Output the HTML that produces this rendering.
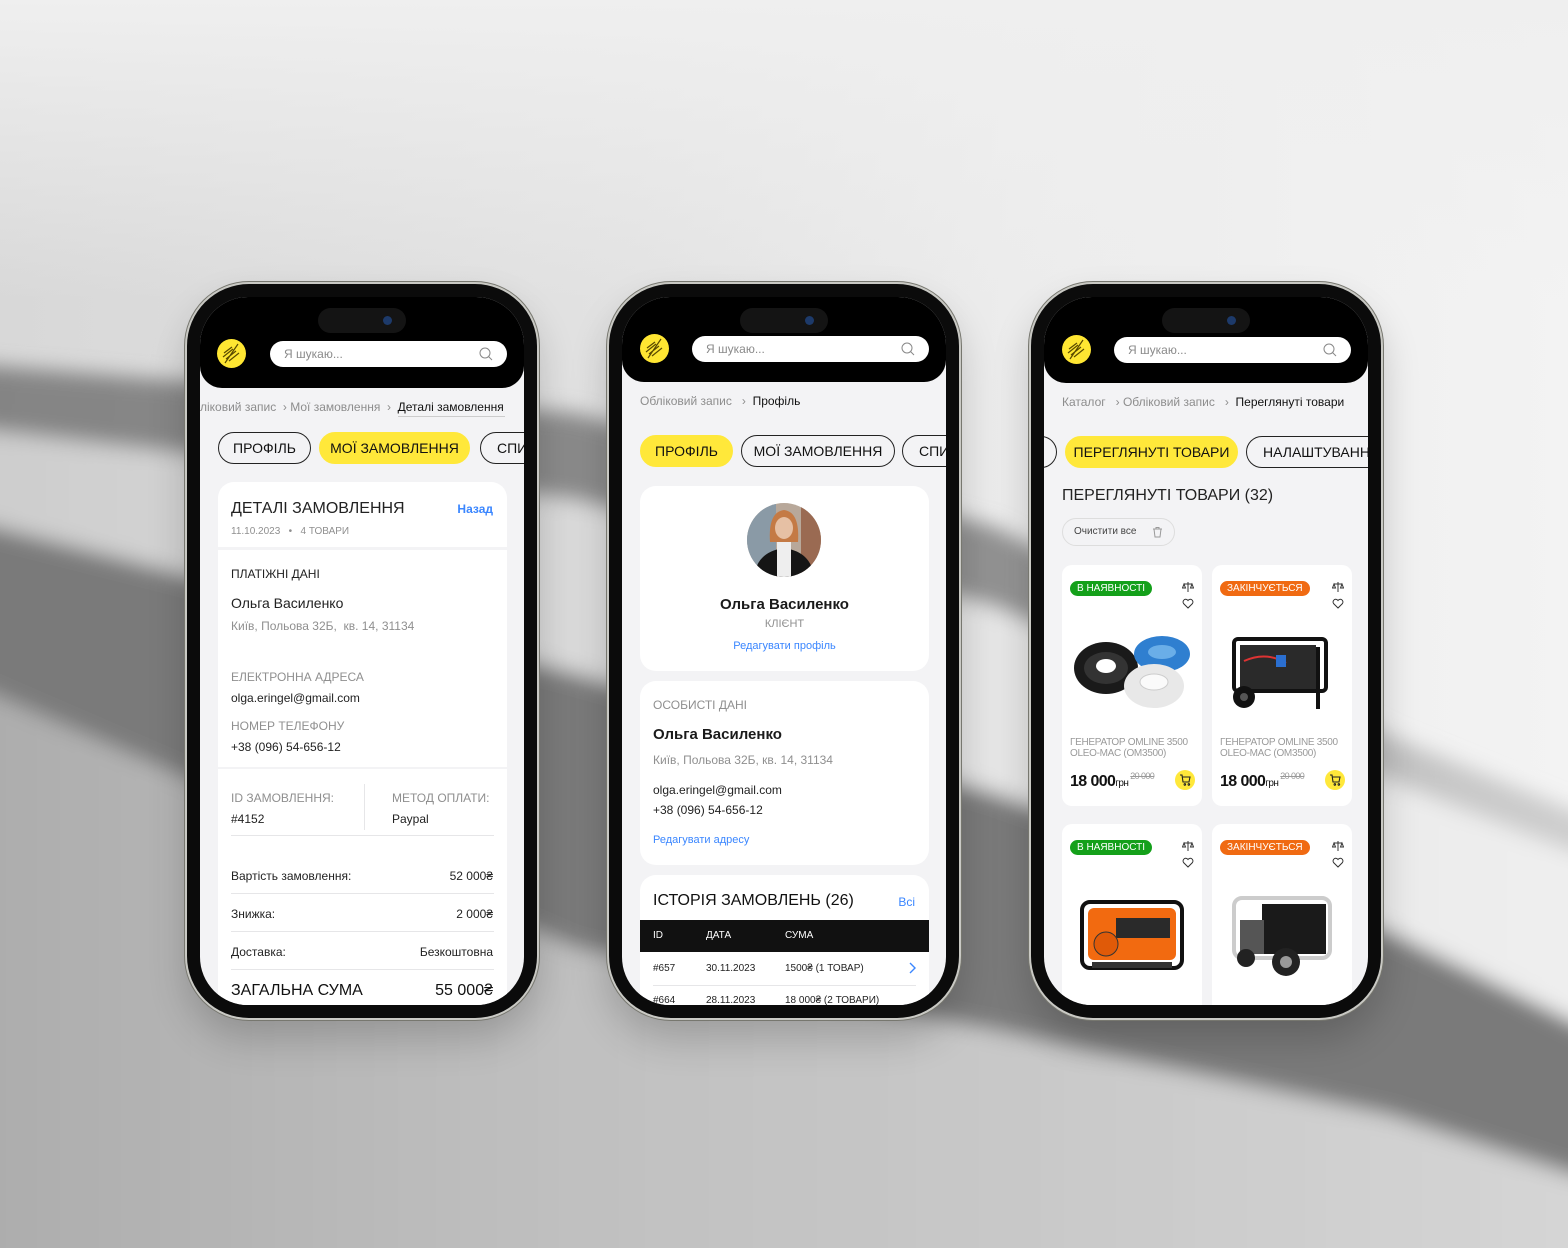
<!DOCTYPE html>
<html><head><meta charset="utf-8"><style>
*{margin:0;padding:0;box-sizing:border-box}
body{width:1568px;height:1248px;overflow:hidden;position:relative;font-family:"Liberation Sans","DejaVu Sans",sans-serif;background:#e6e6e6}
#bg{position:absolute;left:0;top:0}
.phone{position:absolute;top:284px;width:350px;height:734px;border-radius:62px;background:#0b0b0b;box-shadow:0 0 0 2px #c9c9c4,0 0 0 3px #77776f,0 20px 40px rgba(0,0,0,.2)}
.scr{position:absolute;left:13px;top:13px;width:324px;height:708px;border-radius:48px;background:#f3f3f5;overflow:hidden}
.hdr{position:absolute;left:0;top:0;width:324px;background:#000;border-radius:0 0 22px 22px}
.island{position:absolute;left:118px;top:11px;width:88px;height:25px;border-radius:13px;background:#141414}
.island:after{content:"";position:absolute;right:14px;top:8px;width:9px;height:9px;border-radius:50%;background:#1d3a6a}
.logo{position:absolute;width:29px;height:29px;border-radius:50%;background:#ffe632}
.search{position:absolute;left:70px;width:237px;height:26px;border-radius:13px;background:#fff;font-size:12px;color:#8a8a8a;line-height:26px;padding-left:14px}
.search svg{position:absolute;right:14px;top:6px}
.a{position:absolute;white-space:nowrap}
.bc{font-size:12px;color:#8d8d8d;line-height:14px}
.bc b{font-weight:normal;color:#111}
.pill{position:absolute;height:32px;border-radius:16px;border:1.3px solid #222;font-size:14px;line-height:30px;text-align:center;color:#111;white-space:nowrap;overflow:hidden}
.pill.y{background:#ffe83a;border-color:#ffe83a}
.card{position:absolute;background:#fff;border-radius:16px;overflow:hidden}
.g{color:#8f8f8f}
.bl{color:#3a86ff}
.ln{position:absolute;height:1px;background:#e6e6e8}
.pc{position:absolute;width:140px;height:241px;background:#fff;border-radius:10px;overflow:hidden}
.badge{position:absolute;left:8px;top:16px;height:15px;border-radius:8px;color:#fff;font-size:10px;line-height:15px;padding:0 7px}
.nm{position:absolute;left:8px;top:172px;font-size:10px;color:#9a9a9a;line-height:11px;letter-spacing:-.3px}
.pr{position:absolute;left:8px;top:208px;font-size:16px;font-weight:bold;color:#111;letter-spacing:-.6px}
.pr small{font-size:10px;font-weight:normal}
.pr s{font-size:9px;font-weight:normal;color:#999;position:relative;top:-7px;margin-left:2px}
.cart{position:absolute;left:113px;top:205px;width:20px;height:20px;border-radius:50%;background:#ffe83a}
.cart svg{position:absolute;left:4px;top:4px}
</style></head><body>
<svg id="bg" width="1568" height="1248" viewBox="0 0 1568 1248">
<defs>
<linearGradient id="base" x1="0" x2="1" y1="0" y2="0"><stop offset="0" stop-color="#d8d8d8"/><stop offset=".4" stop-color="#e2e2e2"/><stop offset=".65" stop-color="#ececec"/><stop offset="1" stop-color="#f3f3f3"/></linearGradient>
<linearGradient id="top" x1="0" x2="0" y1="0" y2="1"><stop offset="0" stop-color="#efefef"/><stop offset="1" stop-color="#efefef" stop-opacity="0"/></linearGradient>
<linearGradient id="mid" x1="0" x2="1"><stop offset="0" stop-color="#cdcdcd"/><stop offset=".37" stop-color="#dadada"/><stop offset=".63" stop-color="#e6e6e6"/><stop offset="1" stop-color="#efefef"/></linearGradient>
<linearGradient id="low" x1="0" x2="1"><stop offset="0" stop-color="#acacac"/><stop offset=".37" stop-color="#c0c0c0"/><stop offset=".63" stop-color="#c8c8c8"/><stop offset="1" stop-color="#d6d6d6"/></linearGradient>
<linearGradient id="bandA" x1="0" x2="1"><stop offset="0" stop-color="#848484"/><stop offset=".37" stop-color="#8a8a8a"/><stop offset=".63" stop-color="#929292"/><stop offset=".9" stop-color="#c8c8c8"/><stop offset="1" stop-color="#d0d0d0"/></linearGradient>
<filter id="bl" x="-10%" y="-30%" width="120%" height="160%"><feGaussianBlur stdDeviation="10"/></filter>
</defs>
<rect width="1568" height="1248" fill="url(#base)"/>
<rect width="1568" height="300" fill="url(#top)"/>
<g filter="url(#bl)">
<polygon points="-40,427 575,500 995,607 1388,780 1620,870 1620,1040 1388,931 995,793 575,673 -40,520" fill="url(#mid)"/>
<polygon points="-40,363 575,413 995,527 1388,735 1620,830 1620,870 1388,780 995,607 575,500 -40,427" fill="url(#bandA)"/>
<polygon points="-40,518 575,673 995,793 1388,931 1620,1045 1620,1190 1388,1115 995,1031 575,948 -40,680" fill="#7a7a7a"/>
<polygon points="-40,680 575,948 995,1031 1388,1115 1620,1190 1620,1300 -40,1300" fill="url(#low)"/>
</g>
</svg>

<!-- PHONE 1 -->
<div class="phone" style="left:187px"><div class="scr">
<div class="hdr" style="height:91px"></div>
<div class="island"></div>
<div class="logo" style="left:17px;top:42px"><svg width="29" height="29" viewBox="0 0 29 29"><path d="M8 24L21 5M6 18L16 10M9 20L19 12M12 22L22 14M7 14L15 8" stroke="#5a4a00" stroke-width="1.2" fill="none"/></svg></div>
<div class="search" style="top:44px">Я шукаю...<svg width="14" height="14" viewBox="0 0 14 14"><circle cx="6" cy="6" r="5" stroke="#888" fill="none"/><path d="M9.5 9.5L13 13" stroke="#888"/></svg></div>
<div class="a bc" style="left:0;top:103px">ліковий запис &nbsp;› Мої замовлення &nbsp;› &nbsp;<b>Деталі замовлення</b></div>
<div class="ln" style="left:198px;top:119px;width:107px;background:#ccc"></div>
<div class="pill" style="left:18px;top:135px;width:93px">ПРОФІЛЬ</div>
<div class="pill y" style="left:119px;top:135px;width:151px">МОЇ ЗАМОВЛЕННЯ</div>
<div class="pill" style="left:280px;top:135px;width:60px;text-align:left;padding-left:16px">СПИСОК</div>
<div class="card" style="left:18px;top:185px;width:289px;height:600px">
<div class="a" style="left:13px;top:18px;font-size:16px;color:#222">ДЕТАЛІ ЗАМОВЛЕННЯ</div>
<div class="a bl" style="right:14px;top:20px;font-size:12px;font-weight:bold">Назад</div>
<div class="a g" style="left:13px;top:44px;font-size:10px">11.10.2023 &nbsp; • &nbsp; 4 ТОВАРИ</div>
<div class="ln" style="left:0;top:65px;width:289px;height:3px;background:#f3f3f5"></div>
<div class="a" style="left:13px;top:85px;font-size:12px;color:#222">ПЛАТІЖНІ ДАНІ</div>
<div class="a" style="left:13px;top:113px;font-size:14px;color:#222">Ольга Василенко</div>
<div class="a g" style="left:13px;top:137px;font-size:12px">Київ, Польова 32Б, &nbsp;кв. 14, 31134</div>
<div class="a g" style="left:13px;top:188px;font-size:12px">ЕЛЕКТРОННА АДРЕСА</div>
<div class="a" style="left:13px;top:209px;font-size:12px;color:#222">olga.eringel@gmail.com</div>
<div class="a g" style="left:13px;top:237px;font-size:12px">НОМЕР ТЕЛЕФОНУ</div>
<div class="a" style="left:13px;top:258px;font-size:12px;color:#222">+38 (096) 54-656-12</div>
<div class="ln" style="left:0;top:285px;width:289px;height:2px;background:#f3f3f5"></div>
<div class="a g" style="left:13px;top:309px;font-size:12px">ID ЗАМОВЛЕННЯ:</div>
<div class="a g" style="left:174px;top:309px;font-size:12px">МЕТОД ОПЛАТИ:</div>
<div class="ln" style="left:146px;top:302px;width:1px;height:46px"></div>
<div class="a" style="left:13px;top:330px;font-size:12px;color:#222">#4152</div>
<div class="a" style="left:174px;top:330px;font-size:12px;color:#222">Paypal</div>
<div class="ln" style="left:13px;top:353px;width:263px"></div>
<div class="a" style="left:13px;top:387px;font-size:12px;color:#222">Вартість замовлення:</div><div class="a" style="right:14px;top:387px;font-size:12px;color:#222">52 000₴</div>
<div class="ln" style="left:13px;top:411px;width:263px"></div>
<div class="a" style="left:13px;top:425px;font-size:12px;color:#222">Знижка:</div><div class="a" style="right:14px;top:425px;font-size:12px;color:#222">2 000₴</div>
<div class="ln" style="left:13px;top:449px;width:263px"></div>
<div class="a" style="left:13px;top:463px;font-size:12px;color:#222">Доставка:</div><div class="a" style="right:14px;top:463px;font-size:12px;color:#222">Безкоштовна</div>
<div class="ln" style="left:13px;top:487px;width:263px"></div>
<div class="a" style="left:13px;top:500px;font-size:16px;color:#111">ЗАГАЛЬНА СУМА</div><div class="a" style="right:14px;top:500px;font-size:16px;color:#111">55 000₴</div>
</div>
</div></div>

<!-- PHONE 2 -->
<div class="phone" style="left:609px"><div class="scr">
<div class="hdr" style="height:85px"></div>
<div class="island"></div>
<div class="logo" style="left:18px;top:37px"><svg width="29" height="29" viewBox="0 0 29 29"><path d="M8 24L21 5M6 18L16 10M9 20L19 12M12 22L22 14M7 14L15 8" stroke="#5a4a00" stroke-width="1.2" fill="none"/></svg></div>
<div class="search" style="top:39px">Я шукаю...<svg width="14" height="14" viewBox="0 0 14 14"><circle cx="6" cy="6" r="5" stroke="#888" fill="none"/><path d="M9.5 9.5L13 13" stroke="#888"/></svg></div>
<div class="a bc" style="left:18px;top:97px">Обліковий запис &nbsp; › &nbsp;<b>Профіль</b></div>
<div class="pill y" style="left:18px;top:138px;width:93px">ПРОФІЛЬ</div>
<div class="pill" style="left:119px;top:138px;width:154px">МОЇ ЗАМОВЛЕННЯ</div>
<div class="pill" style="left:280px;top:138px;width:60px;text-align:left;padding-left:16px">СПИСОК</div>
<div class="card" style="left:18px;top:189px;width:289px;height:185px">
<svg class="a" style="left:106px;top:16px" width="76" height="76" viewBox="0 0 76 76"><defs><clipPath id="c"><circle cx="38" cy="38" r="37"/></clipPath></defs><g clip-path="url(#c)"><rect width="76" height="76" fill="#b8a89a"/><rect x="0" y="0" width="30" height="76" fill="#8a9aa6"/><rect x="55" y="0" width="21" height="76" fill="#9a6a52"/><path d="M24 40Q22 10 38 8Q54 10 52 40Z" fill="#c47a45"/><ellipse cx="38" cy="26" rx="9" ry="11" fill="#e6c0a4"/><path d="M8 76Q10 50 38 46Q66 50 68 76Z" fill="#151515"/><rect x="31" y="40" width="14" height="36" fill="#eee"/></g></svg>
<div class="a" style="left:0;width:289px;text-align:center;top:110px;font-size:15px;font-weight:bold;color:#1a1a1a">Ольга Василенко</div>
<div class="a g" style="left:0;width:289px;text-align:center;top:132px;font-size:11px">КЛІЄНТ</div>
<div class="a bl" style="left:0;width:289px;text-align:center;top:154px;font-size:11px">Редагувати профіль</div>
</div>
<div class="card" style="left:18px;top:384px;width:289px;height:184px">
<div class="a g" style="left:13px;top:17px;font-size:12px">ОСОБИСТІ ДАНІ</div>
<div class="a" style="left:13px;top:45px;font-size:15px;font-weight:bold;color:#1a1a1a">Ольга Василенко</div>
<div class="a g" style="left:13px;top:72px;font-size:12px">Київ, Польова 32Б, кв. 14, 31134</div>
<div class="a" style="left:13px;top:102px;font-size:12px;color:#222">olga.eringel@gmail.com</div>
<div class="a" style="left:13px;top:122px;font-size:12px;color:#222">+38 (096) 54-656-12</div>
<div class="a bl" style="left:13px;top:153px;font-size:11px">Редагувати адресу</div>
</div>
<div class="card" style="left:18px;top:578px;width:289px;height:200px">
<div class="a" style="left:13px;top:17px;font-size:16px;color:#111">ІСТОРІЯ ЗАМОВЛЕНЬ (26)</div>
<div class="a bl" style="right:14px;top:20px;font-size:12px">Всі</div>
<div class="a" style="left:0;top:45px;width:289px;height:32px;background:#111;color:#fff;font-size:10px;line-height:32px"><span class="a" style="left:13px">ID</span><span class="a" style="left:66px">ДАТА</span><span class="a" style="left:145px">СУМА</span></div>
<div class="a" style="left:13px;top:88px;font-size:10px;color:#222">#657</div><div class="a" style="left:66px;top:88px;font-size:10px;color:#222">30.11.2023</div><div class="a" style="left:145px;top:88px;font-size:10px;color:#222">1500₴ (1 ТОВАР)</div>
<svg class="a" style="left:268px;top:87px" width="8" height="12"><path d="M2 1L7 6L2 11" stroke="#3a86ff" fill="none" stroke-width="1.4"/></svg>
<div class="ln" style="left:13px;top:110px;width:263px"></div>
<div class="a" style="left:13px;top:120px;font-size:10px;color:#222">#664</div><div class="a" style="left:66px;top:120px;font-size:10px;color:#222">28.11.2023</div><div class="a" style="left:145px;top:120px;font-size:10px;color:#222">18 000₴ (2 ТОВАРИ)</div>
</div>
</div></div>

<!-- PHONE 3 -->
<div class="phone" style="left:1031px"><div class="scr">
<div class="hdr" style="height:86px"></div>
<div class="island"></div>
<div class="logo" style="left:18px;top:38px"><svg width="29" height="29" viewBox="0 0 29 29"><path d="M8 24L21 5M6 18L16 10M9 20L19 12M12 22L22 14M7 14L15 8" stroke="#5a4a00" stroke-width="1.2" fill="none"/></svg></div>
<div class="search" style="top:40px">Я шукаю...<svg width="14" height="14" viewBox="0 0 14 14"><circle cx="6" cy="6" r="5" stroke="#888" fill="none"/><path d="M9.5 9.5L13 13" stroke="#888"/></svg></div>
<div class="a bc" style="left:18px;top:98px">Каталог &nbsp; › Обліковий запис &nbsp; › &nbsp;<b>Переглянуті товари</b></div>
<div class="pill" style="left:-80px;top:139px;width:93px"></div>
<div class="pill y" style="left:21px;top:139px;width:173px">ПЕРЕГЛЯНУТІ ТОВАРИ</div>
<div class="pill" style="left:202px;top:139px;width:140px;text-align:left;padding-left:16px">НАЛАШТУВАННЯ</div>
<div class="a" style="left:18px;top:190px;font-size:16px;color:#222">ПЕРЕГЛЯНУТІ ТОВАРИ (32)</div>
<div class="a" style="left:18px;top:221px;width:113px;height:28px;border:1px solid #ddd;border-radius:14px;font-size:10px;color:#444;line-height:26px;padding-left:11px">Очистити все<svg style="position:absolute;left:89px;top:7px" width="11" height="12" viewBox="0 0 11 12"><path d="M1 3H10M4 3V1.5H7V3M2 3L3 11H8L9 3" stroke="#999" fill="none"/></svg></div>

<div class="pc" style="left:18px;top:268px">
<div class="badge" style="background:#14a01a">В НАЯВНОСТІ</div>
<svg class="a" style="left:120px;top:16px" width="12" height="30" viewBox="0 0 12 30"><path d="M6 1V11M2 3H10M2 3L0.5 7H3.5ZM10 3L8.5 7H11.5Z" stroke="#333" fill="none" stroke-width="1"/><path d="M6 27L1.5 22.5A2.5 2.5 0 0 1 6 19.5A2.5 2.5 0 0 1 10.5 22.5Z" stroke="#333" fill="none"/></svg>
<svg class="a" style="left:8px;top:65px" width="124" height="85" viewBox="0 0 124 85"><ellipse cx="36" cy="38" rx="32" ry="26" fill="#1a1a1a"/><ellipse cx="36" cy="38" rx="22" ry="16" fill="#333"/><ellipse cx="36" cy="36" rx="10" ry="7" fill="#fff"/><ellipse cx="92" cy="24" rx="28" ry="18" fill="#2f7fd0"/><ellipse cx="92" cy="22" rx="14" ry="7" fill="#6aaee8"/><ellipse cx="84" cy="56" rx="30" ry="22" fill="#e8e8e8"/><ellipse cx="84" cy="52" rx="14" ry="8" fill="#fafafa" stroke="#ccc"/></svg>
<div class="nm">ГЕНЕРАТОР OMLINE 3500<br>OLEO-MAC (OM3500)</div>
<div class="pr">18 000<small>грн</small><s>20 000</s></div>
<div class="cart"><svg width="12" height="12" viewBox="0 0 12 12"><path d="M1 1H3L4 8H10L11 3H3.5M5 10.5A.8.8 0 1 0 5 10.4M9 10.5A.8.8 0 1 0 9 10.4" stroke="#222" fill="none" stroke-width="1.1"/></svg></div>
</div>
<div class="pc" style="left:168px;top:268px">
<div class="badge" style="background:#f06a12">ЗАКІНЧУЄТЬСЯ</div>
<svg class="a" style="left:120px;top:16px" width="12" height="30" viewBox="0 0 12 30"><path d="M6 1V11M2 3H10M2 3L0.5 7H3.5ZM10 3L8.5 7H11.5Z" stroke="#333" fill="none" stroke-width="1"/><path d="M6 27L1.5 22.5A2.5 2.5 0 0 1 6 19.5A2.5 2.5 0 0 1 10.5 22.5Z" stroke="#333" fill="none"/></svg>
<svg class="a" style="left:14px;top:68px" width="112" height="80" viewBox="0 0 112 80"><rect x="8" y="6" width="92" height="52" rx="4" fill="none" stroke="#111" stroke-width="4"/><rect x="14" y="12" width="76" height="44" fill="#2a2a2a"/><path d="M18 28Q40 18 60 30" stroke="#d33" stroke-width="2" fill="none"/><rect x="50" y="22" width="10" height="12" fill="#2b6fd0"/><circle cx="18" cy="64" r="11" fill="#111"/><circle cx="18" cy="64" r="4" fill="#555"/><rect x="90" y="14" width="4" height="62" fill="#111"/></svg>
<div class="nm">ГЕНЕРАТОР OMLINE 3500<br>OLEO-MAC (OM3500)</div>
<div class="pr">18 000<small>грн</small><s>20 000</s></div>
<div class="cart"><svg width="12" height="12" viewBox="0 0 12 12"><path d="M1 1H3L4 8H10L11 3H3.5M5 10.5A.8.8 0 1 0 5 10.4M9 10.5A.8.8 0 1 0 9 10.4" stroke="#222" fill="none" stroke-width="1.1"/></svg></div>
</div>
<div class="pc" style="left:18px;top:527px">
<div class="badge" style="background:#14a01a">В НАЯВНОСТІ</div>
<svg class="a" style="left:120px;top:16px" width="12" height="30" viewBox="0 0 12 30"><path d="M6 1V11M2 3H10M2 3L0.5 7H3.5ZM10 3L8.5 7H11.5Z" stroke="#333" fill="none" stroke-width="1"/><path d="M6 27L1.5 22.5A2.5 2.5 0 0 1 6 19.5A2.5 2.5 0 0 1 10.5 22.5Z" stroke="#333" fill="none"/></svg>
<svg class="a" style="left:14px;top:68px" width="112" height="84" viewBox="0 0 112 84"><rect x="6" y="10" width="100" height="66" rx="8" fill="none" stroke="#111" stroke-width="4"/><rect x="12" y="16" width="88" height="52" rx="6" fill="#f26a10"/><rect x="40" y="26" width="54" height="20" fill="#2a2a2a"/><circle cx="30" cy="52" r="12" fill="#e05a08" stroke="#333"/><rect x="16" y="70" width="80" height="6" fill="#333"/></svg>
<div class="nm" style="top:228px">ГЕНЕРАТОР OMLINE 3500</div>
</div>
<div class="pc" style="left:168px;top:527px">
<div class="badge" style="background:#f06a12">ЗАКІНЧУЄТЬСЯ</div>
<svg class="a" style="left:120px;top:16px" width="12" height="30" viewBox="0 0 12 30"><path d="M6 1V11M2 3H10M2 3L0.5 7H3.5ZM10 3L8.5 7H11.5Z" stroke="#333" fill="none" stroke-width="1"/><path d="M6 27L1.5 22.5A2.5 2.5 0 0 1 6 19.5A2.5 2.5 0 0 1 10.5 22.5Z" stroke="#333" fill="none"/></svg>
<svg class="a" style="left:14px;top:60px" width="112" height="96" viewBox="0 0 112 96"><rect x="8" y="14" width="96" height="60" rx="8" fill="none" stroke="#ccc" stroke-width="4"/><rect x="36" y="20" width="64" height="50" fill="#1a1a1a"/><rect x="14" y="36" width="24" height="34" fill="#555"/><circle cx="60" cy="78" r="14" fill="#222"/><circle cx="60" cy="78" r="6" fill="#999"/><circle cx="20" cy="74" r="9" fill="#222"/></svg>
<div class="nm" style="top:228px">ГЕНЕРАТОР OMLINE 3500</div>
</div>
</div></div>
</body></html>
